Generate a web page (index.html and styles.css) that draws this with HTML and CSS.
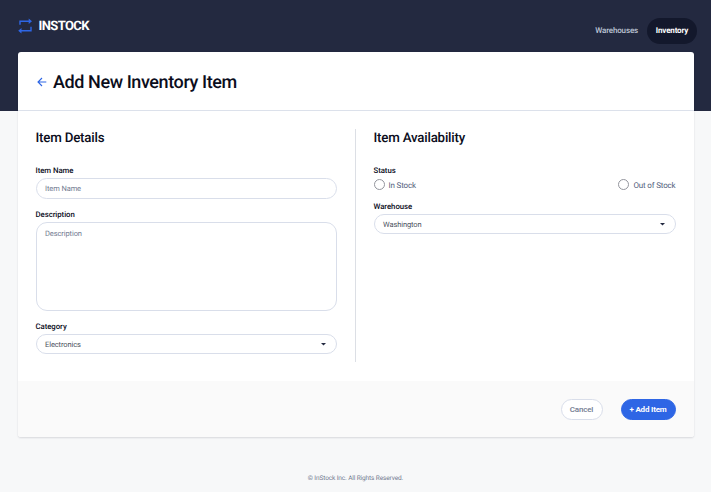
FILE: index.html
```html
<!DOCTYPE html>
<html lang="en">
<head>
<meta charset="utf-8">
<title>InStock</title>
<link rel="stylesheet" href="styles.css">
</head>
<body>
<div class="page">
  <header class="header">
    <a class="logo">
      <svg class="logo-icon" viewBox="0 0 15 16" fill="none" stroke="#2e66e5" stroke-width="1.4"><path d="M2 6.8V3.2h10M13 8.7v4.1H3"/><path d="M10.7.5 14 3.2 10.7 6zM3.5 10 .2 12.8l3.3 2.8z" fill="#2e66e5" stroke="none"/></svg>
      <span class="logo-text">INSTOCK</span>
    </a>
    <nav class="nav">
      <a class="nav-link">Warehouses</a>
      <a class="nav-link nav-active">Inventory</a>
    </nav>
  </header>
  <main class="card">
    <div class="card-head">
      <svg class="back" viewBox="0 0 10 10" fill="none" stroke="#2e66e5" stroke-width="1.1"><path d="M9.3 5H1M5 1 1 5l4 4"/></svg>
      <h1 class="title">Add New Inventory Item</h1>
    </div>
    <form class="form">
      <section class="column details">
        <h2 class="subtitle">Item Details</h2>
        <label class="label">Item Name</label>
        <div class="field name-field"><span class="hint">Item Name</span></div>
        <label class="label">Description</label>
        <div class="field area"><span class="hint">Description</span></div>
        <label class="label">Category</label>
        <div class="field select"><span class="value">Electronics</span><i class="caret"></i></div>
      </section>
      <section class="column availability">
        <h2 class="subtitle">Item Availability</h2>
        <label class="label">Status</label>
        <div class="radios">
          <span class="radio"><i class="dot"></i><span class="radio-text">In Stock</span></span>
          <span class="radio"><i class="dot"></i><span class="radio-text">Out of Stock</span></span>
        </div>
        <label class="label">Warehouse</label>
        <div class="field select"><span class="value">Washington</span><i class="caret"></i></div>
      </section>
    </form>
    <div class="actions">
      <button class="button cancel">Cancel</button>
      <button class="button add">+ Add Item</button>
    </div>
  </main>
  <footer class="footer">© InStock Inc. All Rights Reserved.</footer>
</div>
</body>
</html>
```
FILE: styles.css
```css
* { box-sizing: border-box; }
body { margin: 0; background: #fff; font-family: Roboto, "Liberation Sans", sans-serif; color: #0b0d1c; text-rendering: geometricPrecision; }
h1, h2 { margin: 0; font-weight: 500; }
.page { height: 492px; background: linear-gradient(#232940 111px, #f7f8f9 111px); display: flow-root; }
.header { height: 52px; padding: 17px 14px 0 17.5px; display: flex; justify-content: space-between; align-items: flex-start; }
.logo { display: flex; align-items: center; gap: 6px; height: 18px; }
.logo-icon { width: 15px; height: 16px; margin-top: -1px; }
.logo-text { color: #fff; font-size: 13px; font-weight: 700; letter-spacing: -.6px; }
.nav { display: flex; align-items: center; gap: 9px; height: 27px; }
.nav-link { font-size: 8px; font-weight: 500; color: #bdc5d5; letter-spacing: -.15px; }
.nav-active { width: 50px; height: 26px; border-radius: 13px; background: #13182c; color: #fff; font-weight: 700; display: flex; align-items: center; justify-content: center; }
.card { width: 676px; height: 385px; margin-left: 17.5px; background: #fff; border-radius: 3px; box-shadow: 0 1px 2px rgba(19,24,44,.14); overflow: hidden; }
.card-head { height: 59px; padding: 1px 0 0 19.5px; display: flex; align-items: center; gap: 6px; border-bottom: 1px solid #dce1eb; }
.back { width: 10px; height: 10px; }
.title { font-size: 18px; line-height: 24px; letter-spacing: -.41px; padding-top: 2px; }
.form { height: 270px; padding: 18px 18px 19px; display: flex; }
.column { display: flex; flex-direction: column; }
.details { width: 320px; padding-right: 18px; border-right: 1px solid #dcdfe5; }
.availability { width: 320px; padding-left: 18px; }
.subtitle { height: 37px; padding-top: 1px; font-size: 13.3px; line-height: 18px; letter-spacing: -.2px; }
.label { height: 12px; font-size: 7.8px; line-height: 10px; font-weight: 500; letter-spacing: -.05px; }
.field { border: 1px solid #d9deea; border-radius: 11px; padding: 0 8px 0 8.5px; font-size: 7.5px; letter-spacing: -.1px; display: flex; align-items: center; justify-content: space-between; }
.hint { color: #727b91; }
.name-field { height: 21px; margin-bottom: 11px; }
.area { height: 89px; align-items: flex-start; padding-top: 6px; margin-bottom: 11px; }
.select { height: 20px; }
.value { color: #4b5260; padding-top: 1px; }
.caret { width: 6px; height: 3px; margin-right: 1px; background: #232940; clip-path: polygon(0 0, 100% 0, 50% 100%); }
.radios { height: 13px; display: flex; justify-content: space-between; align-items: center; margin-bottom: 11px; }
.radio { display: flex; align-items: center; gap: 4px; font-size: 8px; letter-spacing: -.16px; color: #53607c; }
.radio-text { padding-top: 1px; }
.dot { width: 11px; height: 11px; border: 1px solid #93959d; border-radius: 50%; }
.actions { height: 56px; background: #fafafa; display: flex; justify-content: flex-end; align-items: center; gap: 18px; padding-right: 18px; }
.button { height: 21px; padding: 0; border: 1px solid #d9deea; border-radius: 11px; font: 500 8px Roboto, sans-serif; letter-spacing: -.18px; }
.cancel { width: 42px; background: #fff; color: #727b91; }
.add { width: 55px; background: #2e66e5; border-color: #2e66e5; color: #fff; font-weight: 700; }
.footer { margin-top: 36px; text-align: center; font-size: 6.5px; line-height: 10px; color: #727b91; letter-spacing: -.12px; }
```
